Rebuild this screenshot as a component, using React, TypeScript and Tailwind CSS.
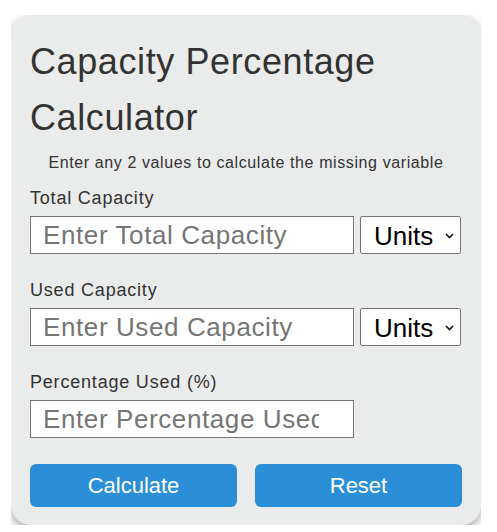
import React, { useState } from "react";

const font = { fontFamily: '"Liberation Sans", Arial, sans-serif' };

function Field({
  label,
  placeholder,
  value,
  onChange,
  units,
}: {
  label: string;
  placeholder: string;
  value: string;
  onChange: (v: string) => void;
  units?: boolean;
}) {
  return (
    <div className="flex flex-col">
      <label className="text-[18px] leading-[24px] tracking-[0.8px] text-[#333333]">{label}</label>
      <div className="mt-[6px] flex gap-[6px]">
        <div className="h-[38px] w-[324px] border border-[#767676] bg-white pr-[34px]">
          <input
            value={value}
            onChange={(e) => onChange(e.target.value)}
            placeholder={placeholder}
            className="h-full w-full bg-transparent pl-[12px] text-[26px] tracking-[0.6px] text-black outline-none placeholder:text-[#757575]"
            style={font}
          />
        </div>
        {units && (
          <div className="relative">
            <select
              className="h-[38px] w-[101px] appearance-none rounded-[2px] border border-[#767676] bg-white pl-[13px] text-[26px] text-black outline-none"
              style={font}
            >
              <option>Units</option>
            </select>
            <svg
              className="pointer-events-none absolute right-[7px] top-[17px]"
              width="9"
              height="6"
              viewBox="0 0 9 6"
              fill="none"
              stroke="#111"
              strokeWidth="1.6"
            >
              <path d="M1 1l3.5 3.5L8 1" />
            </svg>
          </div>
        )}
      </div>
    </div>
  );
}

export default function App() {
  const [total, setTotal] = useState("");
  const [used, setUsed] = useState("");
  const [pct, setPct] = useState("");

  function calculate() {
    const t = parseFloat(total);
    const u = parseFloat(used);
    const p = parseFloat(pct);
    if (!isNaN(t) && !isNaN(u) && pct === "") setPct(((u / t) * 100).toString());
    else if (!isNaN(t) && !isNaN(p) && used === "") setUsed(((t * p) / 100).toString());
    else if (!isNaN(u) && !isNaN(p) && total === "") setTotal(((u * 100) / p).toString());
  }

  function reset() {
    setTotal("");
    setUsed("");
    setPct("");
  }

  return (
    <div className="min-h-[532px] bg-white pl-[11px] pt-[15px]" style={font}>
      <div className="h-[510px] w-[470px] overflow-hidden">
        <div className="h-[510px] w-[470px] rounded-[20px] bg-[#eaebeb] px-[19px] pt-[19px] shadow-[0_4px_10px_rgba(0,0,0,0.35)]">
          <h1 className="text-[36px] leading-[56px] tracking-[0.6px] text-[#333333]">
            Capacity Percentage Calculator
          </h1>
          <p className="mt-[5px] text-center text-[16px] leading-[24px] tracking-[0.6px] text-[#333333]">
            Enter any 2 values to calculate the missing variable
          </p>
          <div className="mt-[11px] flex flex-col gap-[24px]">
            <Field
              label="Total Capacity"
              placeholder="Enter Total Capacity"
              value={total}
              onChange={setTotal}
              units
            />
            <Field
              label="Used Capacity"
              placeholder="Enter Used Capacity"
              value={used}
              onChange={setUsed}
              units
            />
            <Field
              label="Percentage Used (%)"
              placeholder="Enter Percentage Used"
              value={pct}
              onChange={setPct}
            />
          </div>
          <div className="mt-[26px] grid w-[432px] grid-cols-2 gap-[18px]">
            <button
              onClick={calculate}
              className="h-[43px] rounded-[6px] bg-[#2b8fd8] text-[22px] text-white"
            >
              Calculate
            </button>
            <button
              onClick={reset}
              className="h-[43px] rounded-[6px] bg-[#2b8fd8] text-[22px] text-white"
            >
              Reset
            </button>
          </div>
        </div>
      </div>
    </div>
  );
}
